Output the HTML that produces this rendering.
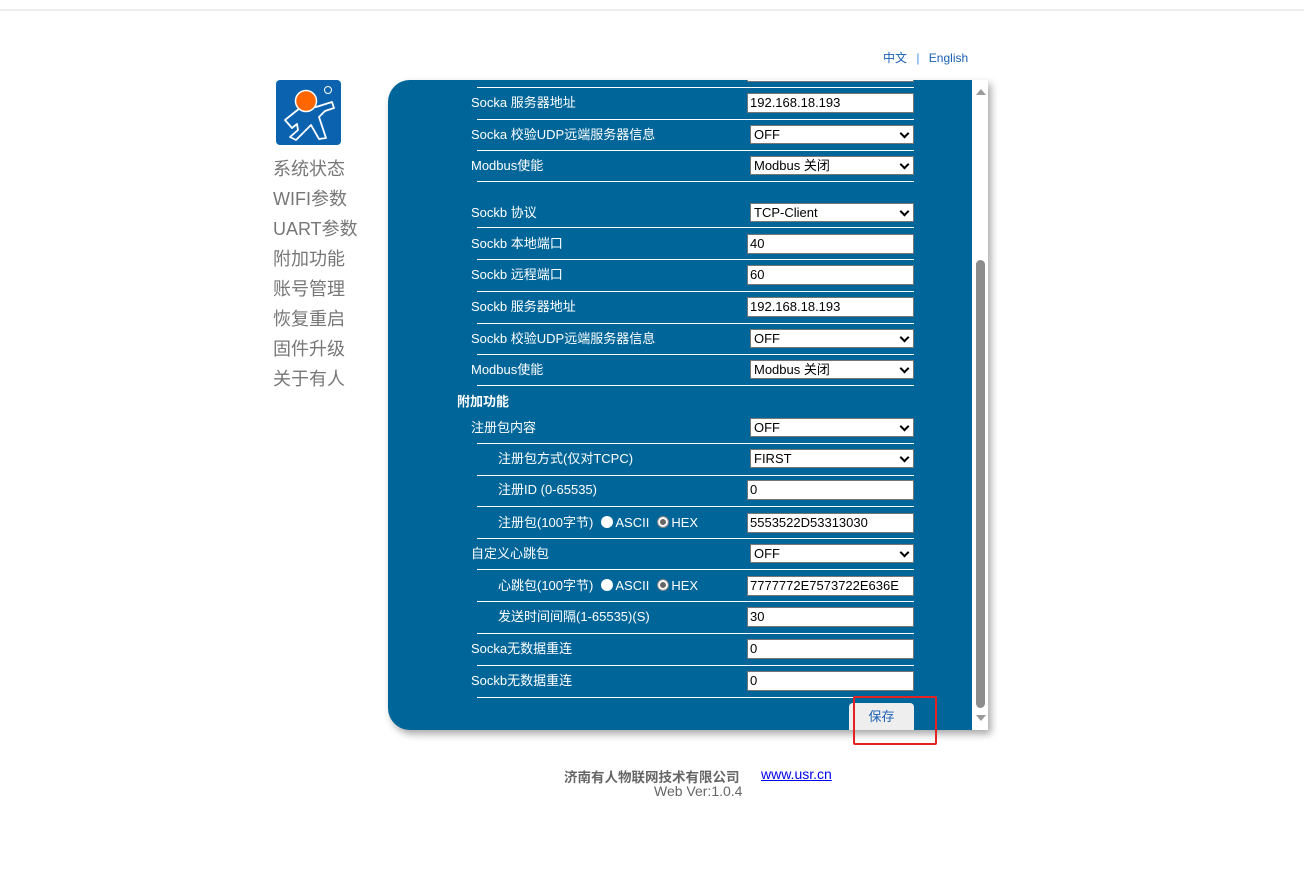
<!DOCTYPE html>
<html><head><meta charset="utf-8"><style>
*{margin:0;padding:0;box-sizing:border-box}
body{width:1304px;height:880px;background:#fff;position:relative;overflow:hidden;font-family:"Liberation Sans","Noto Sans CJK SC",sans-serif}
.a{position:absolute}
.nav{position:absolute;left:273px;font-size:18px;color:#777}
.panel{left:388px;top:80px;width:600px;height:650px;background:#006699;border-radius:22px 0 0 22px;box-shadow:3px 4px 8px rgba(0,0,0,.35);overflow:hidden}
.lbl{position:absolute;color:#fff;font-size:13px;line-height:16px;white-space:nowrap}
.ln{position:absolute;left:89px;width:437px;height:1px;background:#fff}
.in{position:absolute;left:359px;width:167px;height:20px;background:#fff;border:1px solid #767676;font-size:13px;line-height:18px;padding-left:2px;color:#000}
.sel{position:absolute;left:362px;width:164px;height:19px;background:#fff;border:1px solid #767676;font-size:13px;line-height:17px;padding-left:3px;color:#000}
.sel:after{content:"";position:absolute;right:5px;top:4px;width:5px;height:5px;border-right:2px solid #000;border-bottom:2px solid #000;transform:rotate(45deg)}
.rd{display:inline-block;width:12px;height:12px;border-radius:50%;background:#fff;vertical-align:-1px;margin:0 2px 0 8px}
.rd.c{border:1px solid #888;box-shadow:inset 0 0 0 2px #fff;background:#666}
</style></head><body>
<div class="a" style="left:0;top:9px;width:1304px;height:2px;background:#eee"></div>
<div class="a" style="left:883px;top:49px;font-size:12px;color:#1a5fb4">中文 <span style="color:#3a8ee6;margin:0 6px">|</span> English</div>
<svg class="a" style="left:276px;top:80px" width="65" height="65" viewBox="0 0 65 65">
<rect width="65" height="65" rx="4" fill="#0b63b0"/>
<circle cx="52" cy="10" r="3.5" fill="none" stroke="#fff" stroke-width="1"/>
<path d="M24 28 L9 40 L16 48 L21 44 L22 50 L14 57 L20 60 L30 50 L35 45 L43 59 L50 58 L43 37 L49 31 L58 28 L56 22 L40 27 Z" fill="none" stroke="#fff" stroke-width="1.8" stroke-linejoin="round"/>
<circle cx="30" cy="21" r="10.5" fill="#ff6600" stroke="#fff" stroke-width="1.5"/>
</svg>
<div class="nav" style="top:155px">系统状态</div>
<div class="nav" style="top:185px">WIFI参数</div>
<div class="nav" style="top:215px">UART参数</div>
<div class="nav" style="top:245px">附加功能</div>
<div class="nav" style="top:275px">账号管理</div>
<div class="nav" style="top:305px">恢复重启</div>
<div class="nav" style="top:335px">固件升级</div>
<div class="nav" style="top:365px">关于有人</div>

<div class="a panel">
<div class="in" style="top:-18px"></div><div class="ln" style="top:7px"></div>
<div class="lbl" style="left:83px;top:15px">Socka 服务器地址</div><div class="in" style="top:13px">192.168.18.193</div><div class="ln" style="top:39px"></div>
<div class="lbl" style="left:83px;top:47px">Socka 校验UDP远端服务器信息</div><div class="sel" style="top:45px">OFF</div><div class="ln" style="top:70px"></div>
<div class="lbl" style="left:83px;top:78px">Modbus使能</div><div class="sel" style="top:76px">Modbus 关闭</div><div class="ln" style="top:101px"></div>
<div class="lbl" style="left:83px;top:125px">Sockb 协议</div><div class="sel" style="top:123px">TCP-Client</div><div class="ln" style="top:147px"></div>
<div class="lbl" style="left:83px;top:156px">Sockb 本地端口</div><div class="in" style="top:154px">40</div><div class="ln" style="top:179px"></div>
<div class="lbl" style="left:83px;top:187px">Sockb 远程端口</div><div class="in" style="top:185px">60</div><div class="ln" style="top:211px"></div>
<div class="lbl" style="left:83px;top:219px">Sockb 服务器地址</div><div class="in" style="top:217px">192.168.18.193</div><div class="ln" style="top:243px"></div>
<div class="lbl" style="left:83px;top:251px">Sockb 校验UDP远端服务器信息</div><div class="sel" style="top:249px">OFF</div><div class="ln" style="top:274px"></div>
<div class="lbl" style="left:83px;top:282px">Modbus使能</div><div class="sel" style="top:280px">Modbus 关闭</div><div class="ln" style="top:305px"></div>
<div class="lbl" style="left:69px;top:314px;font-weight:bold">附加功能</div>
<div class="lbl" style="left:83px;top:340px">注册包内容</div><div class="sel" style="top:338px">OFF</div><div class="ln" style="top:363px"></div>
<div class="lbl" style="left:110px;top:371px">注册包方式(仅对TCPC)</div><div class="sel" style="top:369px">FIRST</div><div class="ln" style="top:395px"></div>
<div class="lbl" style="left:110px;top:402px">注册ID (0-65535)</div><div class="in" style="top:400px">0</div><div class="ln" style="top:426px"></div>
<div class="lbl" style="left:110px;top:435px">注册包(100字节)<span class="rd"></span>ASCII<span class="rd c"></span>HEX</div><div class="in" style="top:433px">5553522D53313030</div><div class="ln" style="top:458px"></div>
<div class="lbl" style="left:83px;top:466px">自定义心跳包</div><div class="sel" style="top:464px">OFF</div><div class="ln" style="top:489px"></div>
<div class="lbl" style="left:110px;top:498px">心跳包(100字节)<span class="rd"></span>ASCII<span class="rd c"></span>HEX</div><div class="in" style="top:496px">7777772E7573722E636E</div><div class="ln" style="top:521px"></div>
<div class="lbl" style="left:110px;top:529px">发送时间间隔(1-65535)(S)</div><div class="in" style="top:527px">30</div><div class="ln" style="top:553px"></div>
<div class="lbl" style="left:83px;top:561px">Socka无数据重连</div><div class="in" style="top:559px">0</div><div class="ln" style="top:585px"></div>
<div class="lbl" style="left:83px;top:593px">Sockb无数据重连</div><div class="in" style="top:591px">0</div><div class="ln" style="top:617px"></div>
<div class="a" style="left:461px;top:623px;width:65px;height:27px;background:#eee;border-radius:4px 4px 0 0;color:#1a5fb4;font-size:13px;text-align:center;line-height:27px">保存</div>
<div class="a" style="left:584px;top:0;width:16px;height:650px;background:#fff"></div>
<div class="a" style="left:588px;top:180px;width:9px;height:448px;background:#8c8c8c;border-radius:5px"></div>
<div class="a" style="left:588px;top:9px;width:0;height:0;border-left:5px solid transparent;border-right:5px solid transparent;border-bottom:6px solid #999"></div>
<div class="a" style="left:588px;top:635px;width:0;height:0;border-left:5px solid transparent;border-right:5px solid transparent;border-top:6px solid #999"></div>
</div>
<div class="a" style="left:853px;top:696px;width:84px;height:49px;border:2px solid #e52222;border-radius:2px"></div>
<div class="a" style="left:564px;top:766px;font-size:13.5px;font-weight:bold;color:#666">济南有人物联网技术有限公司</div>
<div class="a" style="left:761px;top:766px;font-size:14px;color:#00e;text-decoration:underline">www.usr.cn</div>
<div class="a" style="left:654px;top:783px;font-size:14px;color:#666">Web Ver:1.0.4</div>
</body></html>
